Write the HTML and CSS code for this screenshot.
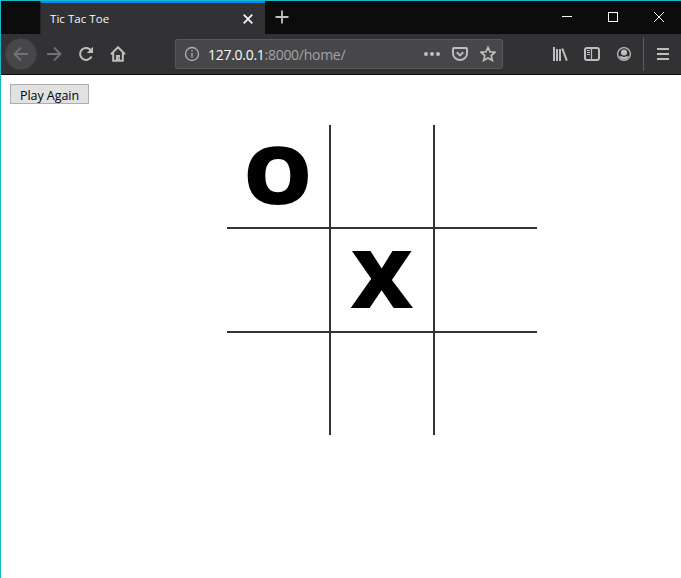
FILE: index.html
```html
<!DOCTYPE html>
<html lang="en">
<head>
<meta charset="utf-8">
<title>Tic Tac Toe</title>
<link rel="stylesheet" href="styles.css">
</head>
<body>
<div class="window">
  <header class="tabbar">
    <div class="tab">
      <span class="tab-title">Tic Tac Toe</span>
      <svg class="tab-close" width="12" height="12" viewBox="0 0 12 12"><path d="M1.7 1.7l8.6 8.6M10.3 1.7l-8.6 8.6"/></svg>
    </div>
    <svg class="new-tab" width="16" height="16" viewBox="0 0 16 16"><path d="M8 1.5v13M1.5 8h13"/></svg>
    <div class="controls">
      <svg width="46" height="30" viewBox="0 0 46 30"><path d="M18 13.5h10"/></svg>
      <svg width="46" height="30" viewBox="0 0 46 30"><path d="M18.5 9.500h9v9h-9z"/></svg>
      <svg width="46" height="30" viewBox="0 0 46 30"><path d="M18 9l10 10M28 9l-10 10"/></svg>
    </div>
  </header>
  <nav class="toolbar">
    <span class="back"><svg class="icon dim" viewBox="0 0 16 16"><path d="M15 8H1.500M8 1.500L1.500 8 8 14.500"/></svg></span>
    <svg class="icon dim forward" viewBox="0 0 16 16"><path d="M1 8h13.500M8 1.500L14.500 8 8 14.500"/></svg>
    <svg class="icon reload" viewBox="0 0 16 16"><path d="M13.200 4.800A6 6 0 1 0 13.500 10.500"/><path class="fill" d="M15 .8v6.200H8.800z"/></svg>
    <svg class="icon home" viewBox="0 0 16 16"><path d="M1 8.200L8 1.200l7 7M3.200 7v7.800h9.600V7"/><path class="fill" d="M6 9h4v6H6z"/><path class="hole" d="M8.200 11.500h1v1h-1z"/></svg>
    <div class="address">
      <svg class="info" width="16" height="16" viewBox="0 0 16 16"><circle cx="8" cy="8" r="6.500"/><path d="M8 7v4.500M8 4v1.600"/></svg>
      <span class="url"><b>127.0.0.1</b>:8000/home/</span>
      <svg class="icon more" viewBox="0 0 16 16"><circle class="fill" cx="2" cy="8" r="2"/><circle class="fill" cx="8" cy="8" r="2"/><circle class="fill" cx="14" cy="8" r="2"/></svg>
      <svg class="icon pocket" viewBox="0 0 16 16"><path d="M2 2h12q1 0 1 1v4.500a7 6.500 0 0 1-14 0V3q0-1 1-1zM4.800 6.300L8 9.400l3.200-3.100"/></svg>
      <svg class="icon star" viewBox="0 0 16 16"><path d="M8 1.300l2 4.500 4.900.5-3.700 3.300 1.100 4.900L8 12l-4.300 2.500 1.100-4.900L1.100 6.300 6 5.800z"/></svg>
    </div>
    <svg class="icon library" viewBox="0 0 16 16"><path d="M2 1v14M5 3v12M8 3v12M10.300 2.500l4.500 12.200"/></svg>
    <svg class="icon sidebar" viewBox="0 0 16 16"><rect x="1" y="2" width="14" height="12" rx="2"/><path class="thin" d="M7.500 2v12M3 4.500h3M3 6.500h3M3 8.500h3"/></svg>
    <svg class="icon account" viewBox="0 0 16 16"><circle class="ring" cx="8" cy="8" r="6.400"/><circle class="fill" cx="8" cy="6.400" r="3"/><path class="fill" d="M3.200 10.200h2.500q2.300 1.600 4.600 0h2.500Q11 13.500 8 13.500t-4.800-3.300z"/></svg>
    <span class="separator"></span>
    <svg class="icon menu" viewBox="0 0 16 16"><path d="M2 3h12M2 8h12M2 13h12"/></svg>
  </nav>
  <main>
    <button class="again">Play Again</button>
    <div class="board">
      <div class="cell"><span class="mark">O</span></div><div class="cell"></div><div class="cell"></div>
      <div class="cell"></div><div class="cell"><span class="mark">X</span></div><div class="cell"></div>
      <div class="cell"></div><div class="cell"></div><div class="cell"></div>
    </div>
  </main>
</div>
</body>
</html>
```
FILE: styles.css
```css
* { box-sizing: border-box; }
body { margin: 0; font-family: "Open Sans", "Noto Sans", sans-serif; }
svg { display: block; flex: none; fill: none; }
.window { height: 578px; border: solid #18b8c8; border-width: 1px 0 0 1px; background: #fff; overflow: hidden; }
.tabbar { display: flex; height: 33px; background: #0c0c0d; }
.tab { display: flex; align-items: center; width: 225px; margin-left: 39px; padding: 0 11px 0 9px; background: #323234; border-top: 2px solid #0a84ff; border-left: 1px solid #262628; }
.tab-title { flex: 1; color: #f9f9fa; font-size: 11.500px; line-height: 16px; letter-spacing: .05px; }
.tab-close { stroke: #f4f4f5; stroke-width: 1.800; }
.new-tab { margin: 8px 0 0 9px; stroke: #c2c2c3; stroke-width: 1.800; }
.controls { display: flex; margin-left: auto; margin-right: -1px; padding-top: 2px; stroke: #fff; shape-rendering: crispEdges; }
.toolbar { display: flex; align-items: center; height: 41px; padding: 0 10px 1px 4px; background: #323234; border-bottom: 1px solid #0c0c0d; }
.icon { width: 16px; height: 16px; stroke: #bebebf; stroke-width: 2; }
.fill { fill: #bebebf; stroke: none; }
.hole { fill: #323234; stroke: none; }
.dim { stroke: #727274; stroke-width: 1.800; }
.back { display: grid; place-items: center; width: 32px; height: 32px; border-radius: 50%; background: #474749; border: 1px solid #404042; }
.forward { margin-left: 9px; }
.reload, .home { margin-left: 16px; }
.address { display: flex; align-items: center; width: 328px; height: 30px; margin-left: 49px; padding: 0 6px 0 8px; border: 1px solid #58585a; border-radius: 2px; background: #474749; }
.info { stroke: #b1b1b3; stroke-width: 1.300; }
.url { flex: 1; margin-left: 8px; padding-top: 2px; color: #a2a2a4; font-size: 14px; line-height: 20px; letter-spacing: -.28px; }
.url b { color: #f9f9fa; font-weight: 400; }
.pocket, .star { margin-left: 12px; }
.star { stroke-width: 1.700; }
.library { margin-left: 49px; }
.sidebar, .account { margin-left: 16px; }
.thin { stroke-width: 1.200; }
.ring { stroke-width: 1.300; }
.separator { width: 1px; height: 34px; margin-left: 11px; background: #5b5b5d; }
.menu { margin-left: 11px; }
main { padding: 9px 0 0 9px; }
.again { display: block; width: 79px; height: 20px; padding: 2px 0 0; border: 1px solid #adadad; background: #e1e1e1; color: #000; font: 12.500px/18px "Open Sans", sans-serif; letter-spacing: -.05px; }
.board { display: grid; grid-template-columns: repeat(3, 102px); grid-auto-rows: 102px; gap: 2px; width: 310px; margin: 21px 0 0 217px; background: #333; }
.cell { display: grid; place-items: center; background: #fff; }
.mark { margin-top: -6px; font-size: 80px; line-height: 102px; font-weight: 800; transform: scaleX(1.085); }
```
